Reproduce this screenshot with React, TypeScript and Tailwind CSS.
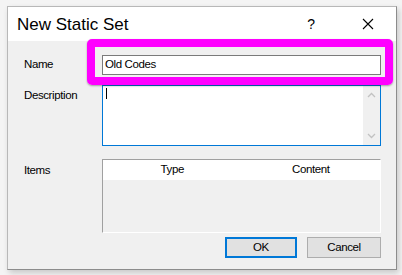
export default function App() {
  return (
    <div className="w-[402px] h-[275px] bg-[#f4f4f4] pl-[7px] pt-[6px] font-['Liberation_Sans',Arial,sans-serif] text-black">
      {/* Dialog window */}
      <div className="w-[390px] h-[264px] flex flex-col border border-[#8c8c8c] border-t-[#b8b8b8] border-l-[#b8b8b8] bg-[#f0f0f0] shadow-[2px_3px_6px_rgba(0,0,0,0.18)]">
        {/* Title bar */}
        <div className="h-[34px] bg-white flex items-center pl-[9px] pr-[22px]">
          <span className="text-[17px] leading-none flex-1">New Static Set</span>
          <span className="text-[14px] leading-none mr-[47px]">?</span>
          <svg width="12" height="12" viewBox="0 0 12 12" className="block">
            <path d="M1 1L11 11M11 1L1 11" stroke="#000" strokeWidth="1.1" />
          </svg>
        </div>

        {/* Body */}
        <div className="flex-1 flex flex-col pl-[16px] pr-[15px] pt-[14px] text-[11.5px] tracking-[-0.4px]">
          {/* Name */}
          <div className="flex items-center h-[20px]">
            <div className="w-[78px]">Name</div>
            <div className="relative flex-1 h-[20px]">
              <div className="h-full border border-[#7a7a7a] bg-white flex items-center pl-[2px]">Old Codes</div>
              <div className="absolute -left-[15px] -right-[12px] -top-[16px] -bottom-[10px] border-[8px] border-[#ff00ff] rounded-[5px] shadow-[0_1px_2px_rgba(0,0,0,0.35)] pointer-events-none" />
            </div>
          </div>

          {/* Description */}
          <div className="flex mt-[10px]">
            <div className="w-[78px] pt-[2px]">Description</div>
            <div className="flex-1 h-[61px] border border-[#0078d7] bg-white flex">
              <div className="flex-1 pl-[3px] pt-[2px]">
                <div className="w-px h-[11px] bg-black" />
              </div>
              <div className="w-[17px] bg-[#f0f0f0] flex flex-col items-center justify-between py-[6px]">
                <svg width="9" height="6" viewBox="0 0 9 6">
                  <path d="M1 5L4.5 1.5L8 5" stroke="#c2c2c2" strokeWidth="1.3" fill="none" />
                </svg>
                <svg width="9" height="6" viewBox="0 0 9 6">
                  <path d="M1 1L4.5 4.5L8 1" stroke="#c2c2c2" strokeWidth="1.3" fill="none" />
                </svg>
              </div>
            </div>
          </div>

          {/* Items */}
          <div className="flex mt-[13px]">
            <div className="w-[78px] pt-[3px]">Items</div>
            <div className="flex-1 h-[74px] border border-[#a0a0a0] border-r-white border-b-white bg-[#f0f0f0] flex flex-col">
              <div className="h-[20px] bg-white grid grid-cols-2 items-center text-center">
                <span>Type</span>
                <span>Content</span>
              </div>
            </div>
          </div>

          {/* Buttons */}
          <div className="flex justify-end gap-[10px] mt-[4px]">
            <button className="w-[72px] h-[21px] border-2 border-[#0078d7] bg-[#e1e1e1] flex items-center justify-center">OK</button>
            <button className="w-[74px] h-[21px] border border-[#adadad] bg-[#e1e1e1] flex items-center justify-center">Cancel</button>
          </div>
        </div>
      </div>
    </div>
  );
}
